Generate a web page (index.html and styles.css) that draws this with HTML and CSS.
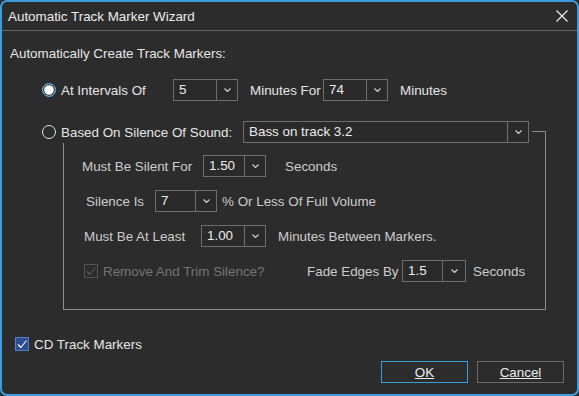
FILE: index.html
```html
<!DOCTYPE html>
<html lang="en">
<head>
  <meta charset="UTF-8">
  <title>Automatic Track Marker Wizard</title>
  <link rel="stylesheet" href="styles.css">
</head>
<body>

<div class="dialog">
  <div class="titlebar">
    <span class="title">Automatic Track Marker Wizard</span>
    <span class="close-btn">
      <svg width="12" height="12" viewBox="0 0 12 12"><path d="M0.5 0.5 L11.5 11.5 M11.5 0.5 L0.5 11.5" stroke="#e8e8e8" stroke-width="1.3" fill="none"/></svg>
    </span>
  </div>

  <div class="heading">Automatically Create Track Markers:</div>

  <div class="row row-interval">
    <span class="radio checked"></span>
    <span class="lbl lbl-interval">At Intervals Of</span>
    <div class="combo w65"><span class="val">5</span><span class="arrow"><svg width="7" height="4" viewBox="0 0 7 4"><polyline points="0.5,0.5 3.5,3.5 6.5,0.5" fill="none" stroke="#d0d0d0" stroke-width="1.2"/></svg></span></div>
    <span class="lbl lbl-for">Minutes For</span>
    <div class="combo w65"><span class="val">74</span><span class="arrow"><svg width="7" height="4" viewBox="0 0 7 4"><polyline points="0.5,0.5 3.5,3.5 6.5,0.5" fill="none" stroke="#d0d0d0" stroke-width="1.2"/></svg></span></div>
    <span class="unit unit-minutes">Minutes</span>
  </div>

  <div class="row row-silence">
    <span class="radio"></span>
    <span class="lbl lbl-silence">Based On Silence Of Sound:</span>
    <div class="combo w286"><span class="val">Bass on track 3.2</span><span class="arrow"><svg width="7" height="4" viewBox="0 0 7 4"><polyline points="0.5,0.5 3.5,3.5 6.5,0.5" fill="none" stroke="#d0d0d0" stroke-width="1.2"/></svg></span></div>
  </div>

  <div class="group">
    <div class="grow">
      <span class="glbl lbl-silent">Must Be Silent For</span>
      <div class="combo w63"><span class="val">1.50</span><span class="arrow"><svg width="7" height="4" viewBox="0 0 7 4"><polyline points="0.5,0.5 3.5,3.5 6.5,0.5" fill="none" stroke="#d0d0d0" stroke-width="1.2"/></svg></span></div>
      <span class="glbl unit-seconds">Seconds</span>
    </div>
    <div class="grow">
      <span class="glbl lbl-is">Silence Is</span>
      <div class="combo w62"><span class="val">7</span><span class="arrow"><svg width="7" height="4" viewBox="0 0 7 4"><polyline points="0.5,0.5 3.5,3.5 6.5,0.5" fill="none" stroke="#d0d0d0" stroke-width="1.2"/></svg></span></div>
      <span class="glbl unit-volume">% Or Less Of Full Volume</span>
    </div>
    <div class="grow">
      <span class="glbl lbl-least">Must Be At Least</span>
      <div class="combo w65"><span class="val">1.00</span><span class="arrow"><svg width="7" height="4" viewBox="0 0 7 4"><polyline points="0.5,0.5 3.5,3.5 6.5,0.5" fill="none" stroke="#d0d0d0" stroke-width="1.2"/></svg></span></div>
      <span class="glbl unit-between">Minutes Between Markers.</span>
    </div>
    <div class="grow">
      <span class="check disabled"><svg width="12" height="12" viewBox="0 0 12 12"><polyline points="2,6.5 4.8,9.5 10.5,2.5" fill="none" stroke="#5c5c5c" stroke-width="1.1"/></svg></span>
      <span class="glbl lbl-trim">Remove And Trim Silence?</span>
      <span class="glbl lbl-fade">Fade Edges By</span>
      <div class="combo w64 wide-arrow"><span class="val">1.5</span><span class="arrow"><svg width="7" height="4" viewBox="0 0 7 4"><polyline points="0.5,0.5 3.5,3.5 6.5,0.5" fill="none" stroke="#d0d0d0" stroke-width="1.2"/></svg></span></div>
      <span class="glbl unit-fade">Seconds</span>
    </div>
  </div>

  <div class="cd-row">
    <span class="check on"><svg width="12" height="12" viewBox="0 0 12 12"><polyline points="2,6.5 4.8,9.5 10.5,2.5" fill="none" stroke="#ffffff" stroke-width="1.1"/></svg></span>
    <span class="lbl">CD Track Markers</span>
  </div>

  <div class="buttons">
    <button class="btn ok"><u>O</u>K</button>
    <button class="btn"><u>C</u>ancel</button>
  </div>
</div>

</body>
</html>
```

FILE: styles.css
```css
* {
  margin: 0;
  padding: 0;
  box-sizing: border-box;
}

body {
  background: #2c2c2c;
  font-family: 'Liberation Sans', Arial, sans-serif;
  font-size: 13.4px;
  color: #e6e6e6;
}

.dialog {
  width: 579px;
  height: 396px;
  background: #2c2c2c;
  border: 2px solid #3b9de0;
  border-radius: 7px;
  overflow: hidden;
}

.titlebar {
  height: 29px;
  display: flex;
  align-items: center;
  justify-content: space-between;
  padding: 0 9px 0 6px;
  border-bottom: 1px solid #626262;
}

.title {
  color: #ececec;
}

.close-btn {
  display: flex;
  width: 12px;
  height: 12px;
}

.heading {
  margin: 14px 0 0 8px;
  height: 18px;
  line-height: 18px;
}

.row {
  display: flex;
  align-items: center;
  height: 22px;
  padding-left: 40px;
}

.row-interval { margin-top: 16px; }

.row-silence {
  margin-top: 20px;
  width: fit-content;
  padding-right: 3px;
  background: #2c2c2c;
  position: relative;
  z-index: 1;
}

.radio {
  width: 14px;
  height: 14px;
  border-radius: 50%;
  border: 1px solid #e2e2e2;
  flex-shrink: 0;
}

.radio.checked {
  border: 1.5px solid #45a4e6;
  background: #ffffff;
  box-shadow: inset 0 0 0 1.2px #2c2c2c;
}

.lbl { margin-left: 5px; }
.lbl-interval { width: 112px; }
.lbl-for { width: 73px; margin-left: 12px; }
.lbl-silence { width: 182px; }
.unit-minutes { margin-left: 12px; }

.combo {
  display: flex;
  height: 22px;
  border: 1px solid #6e6e6e;
  background: #2a2a2a;
  color: #ececec;
}

.combo .val {
  flex: 1;
  padding-left: 5px;
  line-height: 20px;
}

.combo .arrow {
  width: 21px;
  border-left: 1px solid #6e6e6e;
  display: flex;
  align-items: center;
  justify-content: center;
}

.wide-arrow .arrow { width: 23px; }

.w62 { width: 62px; }
.w63 { width: 63px; }
.w64 { width: 64px; }
.w65 { width: 65px; }
.w286 { width: 286px; }

.group {
  margin: -12px 0 0 61px;
  width: 483px;
  border: 1px solid #8c8c8c;
  padding: 23px 0 27px 0;
  display: flex;
  flex-direction: column;
  gap: 13px;
}

.grow {
  display: flex;
  align-items: center;
  height: 22px;
}

.glbl { color: #cdcdcd; }

.lbl-silent { margin-left: 18px; width: 121px; }
.unit-seconds { margin-left: 19px; }
.lbl-is { margin-left: 22px; width: 69px; }
.unit-volume { margin-left: 5px; }
.lbl-least { margin-left: 20px; width: 117px; }
.unit-between { margin-left: 12px; }
.lbl-trim { margin-left: 5px; width: 204px; color: #757575; }
.lbl-fade { width: 95px; }
.unit-fade { margin-left: 7px; }

.check {
  width: 14px;
  height: 14px;
  display: flex;
  align-items: center;
  justify-content: center;
  flex-shrink: 0;
}

.check.disabled {
  margin-left: 20px;
  border: 1px solid #555555;
}

.check.on {
  background: #2b4d92;
  border: 1px solid #5a80c4;
}

.cd-row {
  display: flex;
  align-items: center;
  height: 18px;
  margin-top: 25px;
  padding-left: 13px;
}

.buttons {
  display: flex;
  justify-content: flex-end;
  gap: 9px;
  margin-top: 8px;
  padding-right: 13px;
}

.btn {
  width: 87px;
  height: 22px;
  background: #2c2c2c;
  border: 1px solid #6a6a6a;
  color: #ececec;
  font-family: 'Liberation Sans', Arial, sans-serif;
  font-size: 13.4px;
  text-decoration: underline;
}

.btn u { text-decoration: none; }

.btn.ok { border-color: #3b9de0; }
```
